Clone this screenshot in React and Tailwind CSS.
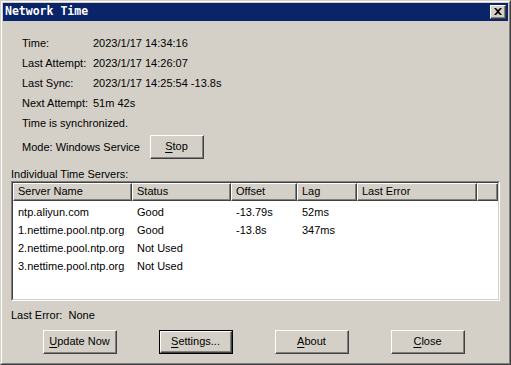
import React from 'react';

const font = { fontFamily: '"Liberation Sans", Arial, sans-serif' };

function Key({ children }) {
  return <span className="underline underline-offset-[2px]">{children}</span>;
}

function Bevel({ children, className }) {
  return (
    <div className="border-t border-l border-white border-r border-b border-r-[#404040] border-b-[#404040]">
      <div className={`border-r border-b border-[#808080] flex items-center justify-center text-[11px] text-black ${className}`}>
        {children}
      </div>
    </div>
  );
}

function Btn({ children, def, w = 'w-[72px]' }) {
  if (def) {
    return (
      <div className="border border-black">
        <Bevel className="w-[70px] h-[20px]">{children}</Bevel>
      </div>
    );
  }
  return <Bevel className={`${w} h-[22px]`}>{children}</Bevel>;
}

function HeadCell({ children, w }) {
  return (
    <div className={`${w} h-[18px] shrink-0 border-t border-l border-white border-r border-b border-r-[#404040] border-b-[#404040]`}>
      <div className="h-full border-r border-b border-[#808080] flex items-center pl-[4px] text-[11px]">{children}</div>
    </div>
  );
}

const servers = [
  ['ntp.aliyun.com', 'Good', '-13.79s', '52ms'],
  ['1.nettime.pool.ntp.org', 'Good', '-13.8s', '347ms'],
  ['2.nettime.pool.ntp.org', 'Not Used', '', ''],
  ['3.nettime.pool.ntp.org', 'Not Used', '', ''],
];

export default function App() {
  const info = [
    ['Time:', '2023/1/17 14:34:16'],
    ['Last Attempt:', '2023/1/17 14:26:07'],
    ['Last Sync:', '2023/1/17 14:25:54 -13.8s'],
    ['Next Attempt:', '51m 42s'],
  ];

  return (
    <div className="w-[511px] h-[365px] bg-[#d4d0c8] text-black" style={font}>
      <div className="w-full h-full border border-t-[#d4d0c8] border-l-[#d4d0c8] border-r-[#404040] border-b-[#404040]">
        <div className="w-full h-full border border-t-white border-l-white border-r-[#808080] border-b-[#808080] p-[1px] flex flex-col">
          {/* Title bar */}
          <div className="h-[18px] bg-[#0a246a] flex items-center justify-between pl-[2px] pr-[2px] shrink-0">
            <span className="text-white text-[11.5px] font-bold leading-none" style={{ fontFamily: '"DejaVu Sans Mono", "Liberation Mono", monospace' }}>
              Network Time
            </span>
            <div className="border-t border-l border-white border-r border-b border-r-[#404040] border-b-[#404040]">
              <div className="w-[14px] h-[12px] bg-[#d4d0c8] border-r border-b border-[#808080] flex items-center justify-center">
                <svg width="8" height="7" viewBox="0 0 8 7">
                  <path d="M0 0h2l2 2 2-2h2L5 3.5 8 7H6L4 5 2 7H0l3-3.5z" fill="#000" />
                </svg>
              </div>
            </div>
          </div>

          {/* Body */}
          <div className="flex-1 flex flex-col px-[8px] text-[11px]">
            <div className="pl-[11px] pt-[12px] flex flex-col">
              {info.map(([k, v]) => (
                <div key={k} className="flex h-[20px] items-center">
                  <span className="w-[71px]">{k}</span>
                  <span>{v}</span>
                </div>
              ))}
              <div className="h-[20px] flex items-center">Time is synchronized.</div>
              <div className="flex items-center mt-[2px]">
                <span className="w-[128px]">Mode: Windows Service</span>
                <Btn w="w-[52px]">
                  <Key>S</Key>top
                </Btn>
              </div>
            </div>

            <div className="mt-[8px] h-[14px] flex items-center">Individual Time Servers:</div>

            <div className="w-[489px] h-[120px] border border-t-[#808080] border-l-[#808080] border-r-white border-b-white">
              <div className="w-full h-full border border-t-[#404040] border-l-[#404040] border-r-[#d4d0c8] border-b-[#d4d0c8] bg-white flex flex-col overflow-hidden">
                <div className="flex bg-[#d4d0c8]">
                  <HeadCell w="w-[119px]">Server Name</HeadCell>
                  <HeadCell w="w-[99px]">Status</HeadCell>
                  <HeadCell w="w-[66px]">Offset</HeadCell>
                  <HeadCell w="w-[60px]">Lag</HeadCell>
                  <HeadCell w="w-[120px]">Last Error</HeadCell>
                  <HeadCell w="w-[21px]"></HeadCell>
                </div>
                <div className="flex flex-col pt-[2px]">
                  {servers.map((s) => (
                    <div key={s[0]} className="flex h-[18px] items-center">
                      <span className="w-[119px] pl-[5px]">{s[0]}</span>
                      <span className="w-[99px] pl-[5px]">{s[1]}</span>
                      <span className="w-[66px] pl-[5px]">{s[2]}</span>
                      <span className="w-[60px] pl-[5px]">{s[3]}</span>
                    </div>
                  ))}
                </div>
              </div>
            </div>

            <div className="mt-[7px] h-[14px] flex items-center">Last Error:&nbsp; None</div>

            <div className="mt-[8px] flex pl-[32px] gap-[42px]">
              <Btn>
                <Key>U</Key>pdate Now
              </Btn>
              <Btn def>
                <Key>S</Key>ettings...
              </Btn>
              <Btn>
                <Key>A</Key>bout
              </Btn>
              <Btn>
                <Key>C</Key>lose
              </Btn>
            </div>
          </div>
        </div>
      </div>
    </div>
  );
}
